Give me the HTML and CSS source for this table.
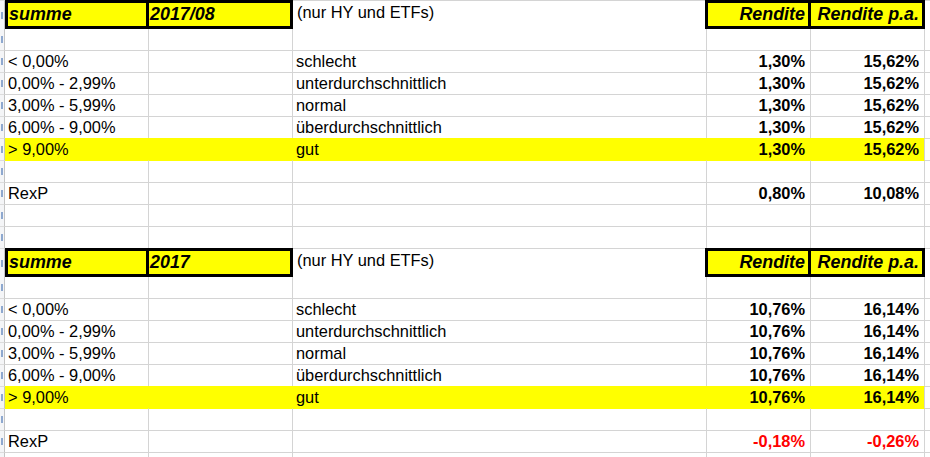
FILE: index.html
```html
<!DOCTYPE html>
<html lang="de">
<head>
<meta charset="utf-8">
<title>summe</title>
<link rel="stylesheet" href="styles.css">
</head>
<body>
<div class="sheet">
  <div class="row hdr first">
    <div class="g"></div>
    <div class="c box bl">summe</div>
    <div class="c box">2017/08</div>
    <div class="c note">(nur HY und ETFs)</div>
    <div class="c box bl shift num">Rendite</div>
    <div class="c box num">Rendite p.a.</div>
    <div class="c f"></div>
  </div>
  <div class="row after-hdr">
    <div class="g"></div><div class="c"></div><div class="c"></div><div class="c"></div><div class="c"></div><div class="c"></div><div class="c f"></div>
  </div>
  <div class="row">
    <div class="g"></div><div class="c">&lt; 0,00%</div><div class="c"></div><div class="c">schlecht</div><div class="c num">1,30%</div><div class="c num">15,62%</div><div class="c f"></div>
  </div>
  <div class="row">
    <div class="g"></div><div class="c">0,00% - 2,99%</div><div class="c"></div><div class="c">unterdurchschnittlich</div><div class="c num">1,30%</div><div class="c num">15,62%</div><div class="c f"></div>
  </div>
  <div class="row">
    <div class="g"></div><div class="c">3,00% - 5,99%</div><div class="c"></div><div class="c">normal</div><div class="c num">1,30%</div><div class="c num">15,62%</div><div class="c f"></div>
  </div>
  <div class="row">
    <div class="g"></div><div class="c">6,00% - 9,00%</div><div class="c"></div><div class="c">überdurchschnittlich</div><div class="c num">1,30%</div><div class="c num">15,62%</div><div class="c f"></div>
  </div>
  <div class="row hl">
    <div class="g"></div><div class="c y">&gt; 9,00%</div><div class="c y"></div><div class="c y">gut</div><div class="c y num">1,30%</div><div class="c y ylast num">15,62%</div><div class="c f"></div>
  </div>
  <div class="row after-hl">
    <div class="g"></div><div class="c"></div><div class="c"></div><div class="c"></div><div class="c"></div><div class="c"></div><div class="c f"></div>
  </div>
  <div class="row">
    <div class="g"></div><div class="c">RexP</div><div class="c"></div><div class="c"></div><div class="c num">0,80%</div><div class="c num">10,08%</div><div class="c f"></div>
  </div>
  <div class="row">
    <div class="g"></div><div class="c"></div><div class="c"></div><div class="c"></div><div class="c"></div><div class="c"></div><div class="c f"></div>
  </div>
  <div class="row">
    <div class="g"></div><div class="c"></div><div class="c"></div><div class="c"></div><div class="c"></div><div class="c"></div><div class="c f"></div>
  </div>
  <div class="row hdr">
    <div class="g"></div>
    <div class="c box bl">summe</div>
    <div class="c box">2017</div>
    <div class="c note">(nur HY und ETFs)</div>
    <div class="c box bl shift num">Rendite</div>
    <div class="c box num">Rendite p.a.</div>
    <div class="c f"></div>
  </div>
  <div class="row after-hdr">
    <div class="g"></div><div class="c"></div><div class="c"></div><div class="c"></div><div class="c"></div><div class="c"></div><div class="c f"></div>
  </div>
  <div class="row">
    <div class="g"></div><div class="c">&lt; 0,00%</div><div class="c"></div><div class="c">schlecht</div><div class="c num">10,76%</div><div class="c num">16,14%</div><div class="c f"></div>
  </div>
  <div class="row">
    <div class="g"></div><div class="c">0,00% - 2,99%</div><div class="c"></div><div class="c">unterdurchschnittlich</div><div class="c num">10,76%</div><div class="c num">16,14%</div><div class="c f"></div>
  </div>
  <div class="row">
    <div class="g"></div><div class="c">3,00% - 5,99%</div><div class="c"></div><div class="c">normal</div><div class="c num">10,76%</div><div class="c num">16,14%</div><div class="c f"></div>
  </div>
  <div class="row">
    <div class="g"></div><div class="c">6,00% - 9,00%</div><div class="c"></div><div class="c">überdurchschnittlich</div><div class="c num">10,76%</div><div class="c num">16,14%</div><div class="c f"></div>
  </div>
  <div class="row hl">
    <div class="g"></div><div class="c y">&gt; 9,00%</div><div class="c y"></div><div class="c y">gut</div><div class="c y num">10,76%</div><div class="c y ylast num">16,14%</div><div class="c f"></div>
  </div>
  <div class="row after-hl">
    <div class="g"></div><div class="c"></div><div class="c"></div><div class="c"></div><div class="c"></div><div class="c"></div><div class="c f"></div>
  </div>
  <div class="row">
    <div class="g"></div><div class="c">RexP</div><div class="c"></div><div class="c"></div><div class="c num neg">-0,18%</div><div class="c num neg">-0,26%</div><div class="c f"></div>
  </div>
  <div class="row">
    <div class="g"></div><div class="c"></div><div class="c"></div><div class="c"></div><div class="c"></div><div class="c"></div><div class="c f"></div>
  </div>
</div>
</body>
</html>
```
FILE: styles.css
```css
* { box-sizing: border-box; }
html, body {
  margin: 0;
  padding: 0;
  background: #fff;
  overflow: hidden;
}
body {
  width: 930px;
  height: 457px;
  font-family: "Liberation Sans", Arial, sans-serif;
  font-size: 16.4px;
  color: #000;
}
.sheet {
  width: 930px;
}
.row {
  display: grid;
  grid-template-columns: 5px 144px 144px 414px 104px 114px 5px;
  height: 22px;
}
.c {
  border-top: 1px solid #d4d4d4;
  border-right: 1px solid #d4d4d4;
  padding: 0 3px;
  line-height: 21px;
  white-space: nowrap;
  overflow: hidden;
}
.c.f { border-right: 0; }
.g {
  background: #f4f5f7;
  border-top: 1px solid #dcdcdc;
  border-right: 1px solid #c4c4c4;
  display: flex;
  justify-content: flex-end;
  align-items: center;
}
.g::before {
  content: "";
  width: 2px;
  height: 7px;
  margin-right: 1px;
  background: #8ea8cf;
}
.num {
  text-align: right;
  font-weight: bold;
  padding-right: 5px;
}
.neg { color: #ff0000; }

/* header rows */
.hdr { height: 29px; }
.hdr .c { line-height: 23px; }
.hdr .note { padding-left: 4px; }
.box {
  background: #ffff00;
  border-top: 3px solid #000;
  border-bottom: 3px solid #000;
  border-right: 3px solid #000;
  font-weight: bold;
  font-style: italic;
  font-size: 17.9px;
  padding-left: 1px;
}
.box.bl { border-left: 3px solid #000; }
.box.num { padding-right: 3px; }
.box.shift { margin-left: -2px; }
.after-hdr { height: 21px; }
.after-hdr .c, .after-hdr .g { border-top: 0; }

/* highlighted rows */
.y {
  background: #ffff00;
  border-top-color: #ffff00;
  border-right-color: #ffff00;
}
.y.ylast { border-right-color: #d4d4d4; }
.after-hl .c:not(.f) { border-top-color: #ffff00; }
```
